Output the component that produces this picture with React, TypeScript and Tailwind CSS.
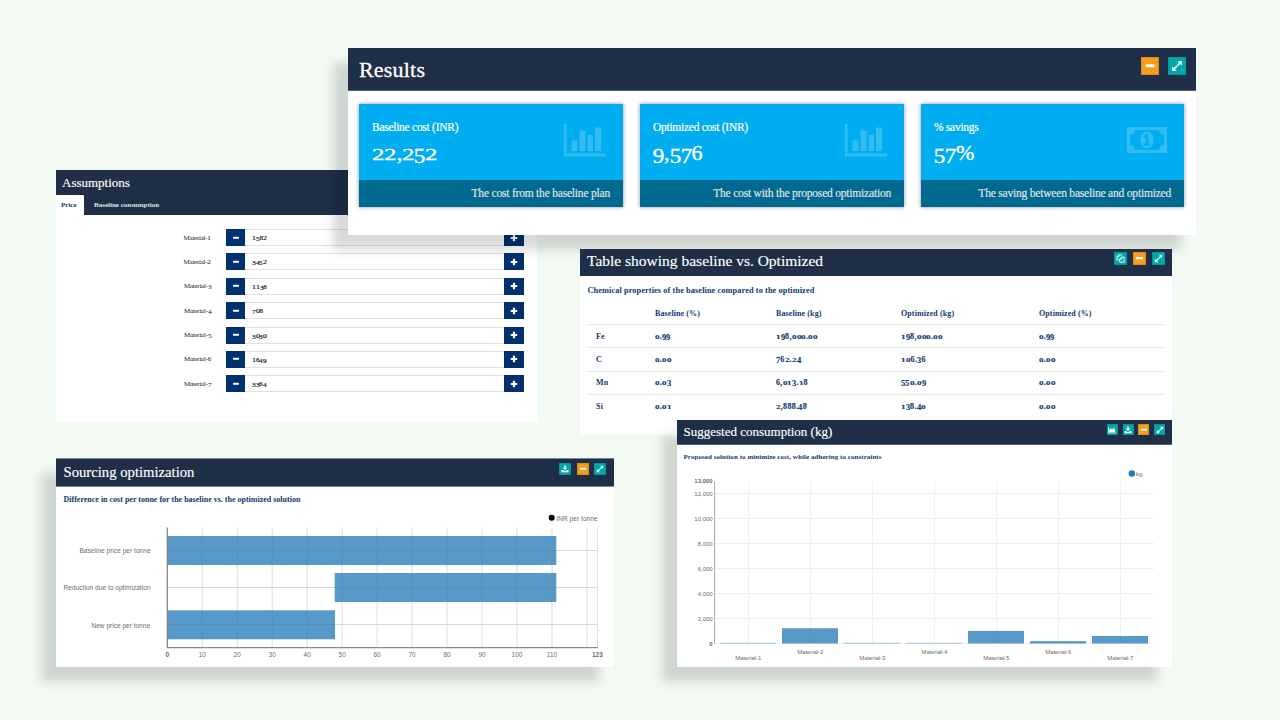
import React from "react";

type Kind = "bars" | "area" | "download" | "copy" | "minus" | "expand";

const serif = "font-['Liberation_Serif',serif]";

/* Old-style figures: 0-2 sit at x-height, 3 4 5 7 9 descend, 6 and 8 stay tall. */
function Figures({ text }: { text: string }) {
  return (
    <span className="whitespace-nowrap">
      {text.split("").map((c, i) => {
        if ("012".includes(c))
          return (
            <span key={i} className="inline-block origin-[50%_84%] scale-x-[1.14] scale-y-[0.78] px-[0.03em] leading-none">
              {c}
            </span>
          );
        if ("34579".includes(c))
          return (
            <span key={i} className="inline-block translate-y-[0.14em] scale-x-[1.05] leading-none">
              {c}
            </span>
          );
        return c;
      })}
    </span>
  );
}

function Glyph({ kind, className }: { kind: Kind | "plus"; className: string }) {
  return (
    <svg viewBox="0 0 16 16" className={className} fill="currentColor">
      {kind === "minus" && <rect x="2" y="5.5" width="12" height="4" rx="0.8" />}
      {kind === "plus" && <path d="M5.800 1.500h4.400v4.300h4.300v4.400h-4.300v4.300H5.800v-4.300H1.500V5.800h4.300z" />}
      {kind === "expand" && (
        <path d="M8.500 1.500H14.500V7.500L12.400 5.400L10 7.800L8.200 6L10.600 3.600z M1.500 14.500V8.500L3.600 10.600L6 8.200L7.800 10L5.400 12.400L7.500 14.500z M6.300 8.700L8.700 6.300L9.700 7.300L7.300 9.700z" />
      )}
      {kind === "download" && (
        <path d="M6.500 1h3v4.500h3L8 10.200 3.500 5.500h3z M1 10h3.500l2.200 2h2.600l2.200-2H15v4.500H1z" />
      )}
      {kind === "area" && <path d="M0 2h1.400v11H16v1.400H0z M2.600 12V8l3-3.500 2.200 2.600L12.500 3.500 14.500 12z" />}
      {kind === "copy" && (
        <path
          fill="none"
          stroke="currentColor"
          strokeWidth="1.5"
          d="M9.500 4V1.500H5L1.500 5v5.500H6 M5 1.500V5H1.500 M10 5.500h4.500v9H6.500V9z M10 5.500V9H6.500"
        />
      )}
    </svg>
  );
}

function BarsIcon() {
  return (
    <svg viewBox="0 0 43 33" className="h-[33px] w-[43px] text-white/20" fill="currentColor">
      <path d="M1 0h2.500v29.500H43V32.500H1z M8.500 16.500h6V27h-6z M16.500 6.500h6V27h-6z M24.500 11h5.500v16h-5.500z M32 3.500h6V27h-6z" />
    </svg>
  );
}

function MoneyIcon() {
  return (
    <svg viewBox="0 0 40 26" className="h-[26px] w-[40px] text-white/20" fill="currentColor">
      <path
        fillRule="evenodd"
        d="M0 0h40v26H0z M8 3a5 5 0 0 1-5 5v10a5 5 0 0 1 5 5h24a5 5 0 0 1 5-5V8a5 5 0 0 1-5-5z M20 4.500c4 0 6.500 4 6.500 8.500S24 21.500 20 21.500 13.500 17.500 13.500 13 16 4.500 20 4.500z M19 7l-3 2.500 1.200 1.700 1.600-1.200V16.500h-2.300v2h7v-2h-2.300V7z"
      />
    </svg>
  );
}

function Tools({ kinds, box, glyph, gap }: { kinds: Kind[]; box: string; glyph: string; gap: string }) {
  return (
    <div className={"flex " + gap}>
      {kinds.map((k) => (
        <button
          key={k}
          className={
            "flex items-center justify-center border text-white " +
            box +
            (k === "minus" ? " border-[#d98d1f] bg-[#f89c1c]" : " border-[#0a9496] bg-[#00a9ab]")
          }
        >
          <Glyph kind={k} className={glyph} />
        </button>
      ))}
    </div>
  );
}

const kpis = [
  { label: "Baseline cost (INR)", value: "22,252", note: "The cost from the baseline plan", money: false },
  { label: "Optimized cost (INR)", value: "9,576", note: "The cost with the proposed optimization", money: false },
  { label: "% savings", value: "57%", note: "The saving between baseline and optimized", money: true },
];

function Results() {
  return (
    <section className="absolute left-[348px] top-[48px] h-[187px] w-[848px] bg-white shadow-[-15px_15px_10px_rgba(0,0,0,0.15)]">
      <header className="flex h-[43px] items-start justify-between border-b border-[#55637a] bg-[#1e2f47] pl-[11px] pr-[10px] text-white">
        <h1 className="mt-[6px] text-[22px] leading-[32px] tracking-[0.2px] [-webkit-text-stroke:0.3px]">Results</h1>
        <div className="mt-[9px]">
          <Tools kinds={["minus", "expand"]} box="size-[18px]" glyph="size-[12px]" gap="gap-[9px]" />
        </div>
      </header>
      <div className="grid grid-cols-[264px_264px_263px] gap-[17px] pl-[11px] pt-[13px]">
        {kpis.map((k) => (
          <div key={k.label} className="flex h-[103px] flex-col bg-[#00adf1] text-white shadow-[0_0_4px_rgba(0,0,0,0.45)]">
            <div className="flex h-[76px] justify-between pl-[13px] pr-[17px]">
              <div className="flex flex-col pt-[14px] [-webkit-text-stroke:0.2px]">
                <span className="text-[11.500px] leading-[18px] tracking-[-0.27px] whitespace-nowrap">{k.label}</span>
                <span className="mt-[3.500px] text-[22px] leading-[26px] text-white [-webkit-text-stroke:0.35px]">
                  <Figures text={k.value} />
                </span>
              </div>
              <div className={k.money ? "pt-[23px]" : "pt-[20px]"}>{k.money ? <MoneyIcon /> : <BarsIcon />}</div>
            </div>
            <div className="flex h-[27px] items-center justify-end bg-[#00698f] pr-[13px] pt-px text-[11.500px] tracking-[-0.2px] whitespace-nowrap text-[#e4e6e6] [-webkit-text-stroke:0.15px]">
              {k.note}
            </div>
          </div>
        ))}
      </div>
    </section>
  );
}

const prices = ["1582", "3452", "1138", "708", "3030", "1649", "3364"];

function Assumptions() {
  return (
    <section className="absolute left-[56px] top-[170px] h-[252px] w-[481px] bg-white">
      <header className="flex h-[45px] flex-col justify-between bg-[#1e2f47] text-white">
        <h2 className="pl-[6px] pt-[4px] text-[13px] leading-[17px] [-webkit-text-stroke:0.15px]">Assumptions</h2>
        <nav className="flex h-[20px] items-center text-[7px] font-bold">
          <span className="flex h-[21px] w-[28px] items-center rounded-tr-[1px] bg-white pl-[5px] text-[#143a70]">Price</span>
          <span className="pl-[10px] text-[#dfe3e8]">Baseline consumption</span>
        </nav>
      </header>
      <div className="flex flex-col gap-[7.400px] pt-[14px]">
        {prices.map((p, i) => (
          <div key={p} className="flex h-[17px] items-center">
            <label className="w-[155px] text-right text-[7px] leading-[12px] tracking-[-0.25px] text-[#222]">
              Material-<Figures text={String(i + 1)} />
            </label>
            <div className="ml-[15px] flex h-[17px] w-[298px] border-y border-[#dfe0e2]">
              <button className="-my-px flex w-[19px] items-center justify-center bg-[#00306e] text-white">
                <Glyph kind="minus" className="size-[8px]" />
              </button>
              <span className="flex-1 pl-[7px] pt-px text-[7px] leading-[15px] text-[#111] [-webkit-text-stroke:0.15px]">
                <Figures text={p} />
              </span>
              <button className="-my-px flex w-[20px] items-center justify-center bg-[#00306e] text-white">
                <Glyph kind="plus" className="size-[8px]" />
              </button>
            </div>
          </div>
        ))}
      </div>
    </section>
  );
}

const rows = [
  ["Fe", "0.99", "198,000.00", "198,000.00", "0.99"],
  ["C", "0.00", "762.24", "106.36", "0.00"],
  ["Mn", "0.03", "6,013.18", "550.09", "0.00"],
  ["Si", "0.01", "2,888.48", "138.40", "0.00"],
];
const cols = "grid grid-cols-[58px_121px_125px_138px_1fr] items-center pl-[9px]";

function Comparison() {
  return (
    <section className="absolute left-[580px] top-[249px] h-[186px] w-[592px] bg-white">
      <header className="flex h-[27px] justify-between bg-[#1e2f47] pl-[7px] pr-[7px] text-white">
        <h2 className="text-[15.500px] leading-[24px] [-webkit-text-stroke:0.15px]">Table showing baseline vs. Optimized</h2>
        <div className="pt-[3px]">
          <Tools kinds={["copy", "minus", "expand"]} box="size-[13px]" glyph="size-[9px]" gap="gap-[6px]" />
        </div>
      </header>
      <p className="mt-[8px] pl-[7.500px] text-[8.300px] leading-[13px] font-bold tracking-[0.090px] text-[#12396f]">
        Chemical properties of the baseline compared to the optimized
      </p>
      <div className="ml-[7px] mr-[8px] text-[8px] font-bold text-[#12396f]">
        <div className={cols + " h-[28px] border-b border-[#e3e5e8] pt-[6px] tracking-[0.1px]"}>
          <span />
          <span className="pl-px">Baseline (%)</span>
          <span className="pl-px">Baseline (kg)</span>
          <span className="pl-px">Optimized (kg)</span>
          <span className="pl-px">Optimized (%)</span>
        </div>
        {rows.map((r) => (
          <div key={r[0]} className={cols + " h-[23.400px] border-b border-[#e8eaec] pt-px last:border-b-0"}>
            {r.map((c, i) => (
              <span key={i} className={i ? "pl-px tracking-[0.3px] [-webkit-text-stroke:0.15px]" : "tracking-[0.2px]"}>
                <Figures text={c} />
              </span>
            ))}
          </div>
        ))}
      </div>
    </section>
  );
}

const ticks = [0, 10, 20, 30, 40, 50, 60, 70, 80, 90, 100, 110, 120, 123];

function Sourcing() {
  return (
    <section className="absolute left-[56px] top-[458px] h-[209px] w-[558px] bg-white shadow-[-15px_15px_10px_rgba(0,0,0,0.15)]">
      <header className="flex h-[29px] justify-between border-y border-[#76839a] bg-[#1e2f47] pl-[7.500px] pr-[8px] text-white">
        <h2 className="text-[14.700px] leading-[26px] [-webkit-text-stroke:0.15px]">Sourcing optimization</h2>
        <div className="pt-[4px]">
          <Tools kinds={["download", "minus", "expand"]} box="size-[12px]" glyph="size-[8px]" gap="gap-[5.500px]" />
        </div>
      </header>
      <p className="h-[21px] pl-[7.500px] pt-[6px] text-[8px] leading-[14px] font-bold text-[#12396f]">
        Difference in cost per tonne for the baseline vs. the optimized solution
      </p>
      <svg viewBox="56 508 558 159" className="h-[159px] w-[558px] font-['Liberation_Sans',sans-serif] text-[6.500px]" fill="#6c6c6c">
        {ticks.slice(1).map((t) => (
          <line key={t} x1={167.300 + t * 3.497} x2={167.300 + t * 3.497} y1="527.500" y2="648" stroke="#dedede" />
        ))}
        {[550.5, 587.5, 624.5].map((y) => (
          <line key={y} x1="167" x2="597.500" y1={y} y2={y} stroke="#d8d8d8" />
        ))}
        <rect x="167" y="536" width="389.300" height="29" fill="#1f77b4" fillOpacity="0.75" />
        <rect x="334.700" y="573" width="221.600" height="29" fill="#1f77b4" fillOpacity="0.75" />
        <rect x="167" y="610.300" width="168" height="29" fill="#1f77b4" fillOpacity="0.75" />
        <path d="M167.300 527.500V647.700H598" fill="none" stroke="#888" strokeWidth="1.300" />
        <text x="79.500" y="553" textLength="71">Baseline price per tonne</text>
        <text x="63.500" y="590" textLength="87">Reduction due to optimization</text>
        <text x="91.500" y="627.500" textLength="58.500">New price per tonne</text>
        {ticks.filter((t) => t !== 120).map((t) => (
          <text key={t} x={167.300 + t * 3.497} y="656.800" textAnchor="middle" fontWeight={t === 0 || t === 123 ? 700 : 400}>
            {t}
          </text>
        ))}
        <circle cx="551.700" cy="517.800" r="3" fill="#000" />
        <text x="556.500" y="520.500" textLength="41">INR per tonne</text>
      </svg>
    </section>
  );
}

const usage = [60, 1220, 60, 60, 1010, 190, 600];

function Suggested() {
  return (
    <section className="absolute left-[677px] top-[420px] h-[247px] w-[495px] bg-white shadow-[-15px_15px_10px_rgba(0,0,0,0.15)]">
      <header className="flex h-[25px] justify-between border-b border-[#55637a] bg-[#1e2f47] pl-[6.500px] pr-[7px] text-white">
        <h2 className="text-[13px] leading-[24px] [-webkit-text-stroke:0.15px]">Suggested consumption (kg)</h2>
        <div className="pt-[4px]">
          <Tools kinds={["area", "download", "minus", "expand"]} box="size-[11px]" glyph="size-[8px]" gap="gap-[4.700px]" />
        </div>
      </header>
      <p className="h-[18px] pl-[6.500px] pt-[5px] text-[7px] leading-[14px] font-bold tracking-[0.060px] text-[#12396f]">
        Proposed solution to minimize cost, while adhering to constraints
      </p>
      <svg viewBox="677 463 495 204" className="h-[204px] w-[495px] font-['Liberation_Sans',sans-serif] text-[6px]" fill="#6c6c6c">
        {usage.map((_, i) => (
          <line key={i} x1={748.500 + i * 62} x2={748.500 + i * 62} y1="481" y2="643" stroke="#f0f0f0" />
        ))}
        {[0, 2, 4, 6, 8, 10, 12, 13].map((v) => (
          <g key={v}>
            {v < 13 && <line x1="714" x2="1154" y1={643.500 - v * 12.500} y2={643.500 - v * 12.500} stroke="#eeeeee" />}
            <text
              x="712.700"
              y={645.500 - v * 12.500}
              textAnchor="end"
              fontWeight={v === 13 || v === 0 ? 700 : 400}
            >
              {v === 0 ? "0" : v + ",000"}
            </text>
          </g>
        ))}
        <path d="M714.500 481V643.500" stroke="#aaa" strokeWidth="1" />
        {usage.map((u, i) => (
          <g key={i}>
            <rect
              x={720 + i * 62}
              y={643.500 - u / 80}
              width="56"
              height={u / 80}
              fill="#1f77b4"
              fillOpacity={u < 100 ? 0.5 : 0.75}
            />
            <text x={748.300 + i * 62} y={i % 2 ? 653.500 : 660} textAnchor="middle" textLength="26">
              {"Material-" + (i + 1)}
            </text>
          </g>
        ))}
        <circle cx="1131.800" cy="473.500" r="3.200" fill="#1f77b4" />
        <text x="1136" y="475.700">kg</text>
      </svg>
    </section>
  );
}

export default function App() {
  return (
    <main className={"relative h-[720px] w-[1280px] overflow-hidden bg-[#f3faf4] " + serif}>
      <Assumptions />
      <Results />
      <Comparison />
      <Sourcing />
      <Suggested />
    </main>
  );
}
